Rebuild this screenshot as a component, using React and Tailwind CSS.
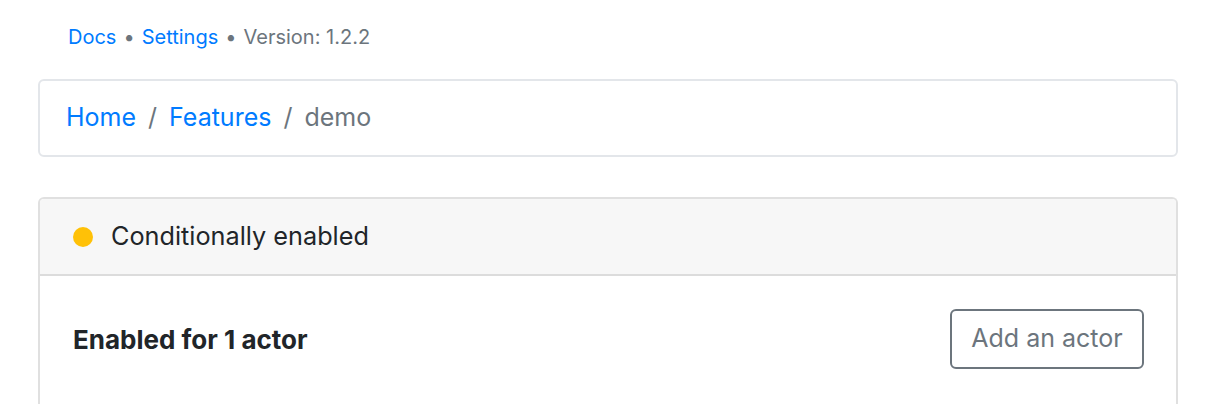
export default function App() {
  return (
    <div className="min-h-screen bg-white text-[#212529]" style={{ fontFamily: 'Inter, "Noto Sans", sans-serif' }}>
      <div className="w-[1140px] ml-[38px]">
        <nav className="h-[79px] pt-[23px] pl-[30px] flex items-start gap-[7px] text-[20px] leading-[28px]">
          <a className="text-[#007bff]">Docs</a>
          <span className="text-[#6c757d]">•</span>
          <a className="text-[#007bff]">Settings</a>
          <span className="text-[#6c757d]">•</span>
          <span className="text-[#6c757d]">Version: 1.2.2</span>
        </nav>

        <div className="h-[78px] border-2 border-[#e3e6ea] rounded-[6px] flex items-center px-[26px] text-[25px] gap-[12px]">
          <a className="text-[#007bff]">Home</a>
          <span className="text-[#6c757d]">/</span>
          <a className="text-[#007bff]">Features</a>
          <span className="text-[#6c757d]">/</span>
          <span className="text-[#6c757d]">demo</span>
        </div>

        <div className="mt-[40px] border-2 border-[#e0e0e0] border-b-0 rounded-t-[6px] overflow-hidden">
          <div className="h-[77px] bg-[#f7f7f7] border-b-2 border-[#dcdcdc] flex items-center pl-[33px] gap-[18px]">
            <span className="w-[20px] h-[20px] rounded-full bg-[#ffc107]" />
            <span className="text-[25.25px]">Conditionally enabled</span>
          </div>
          <div className="h-[130px] flex items-start justify-between pl-[33px] pr-[32px] pt-[33px]">
            <span className="text-[26px] font-bold leading-[62px]">Enabled for 1 actor</span>
            <button className="w-[194px] h-[60px] border-2 border-[#6c757d] rounded-[6px] text-[25px] text-[#6c757d]">Add an actor</button>
          </div>
        </div>
      </div>
    </div>
  );
}
